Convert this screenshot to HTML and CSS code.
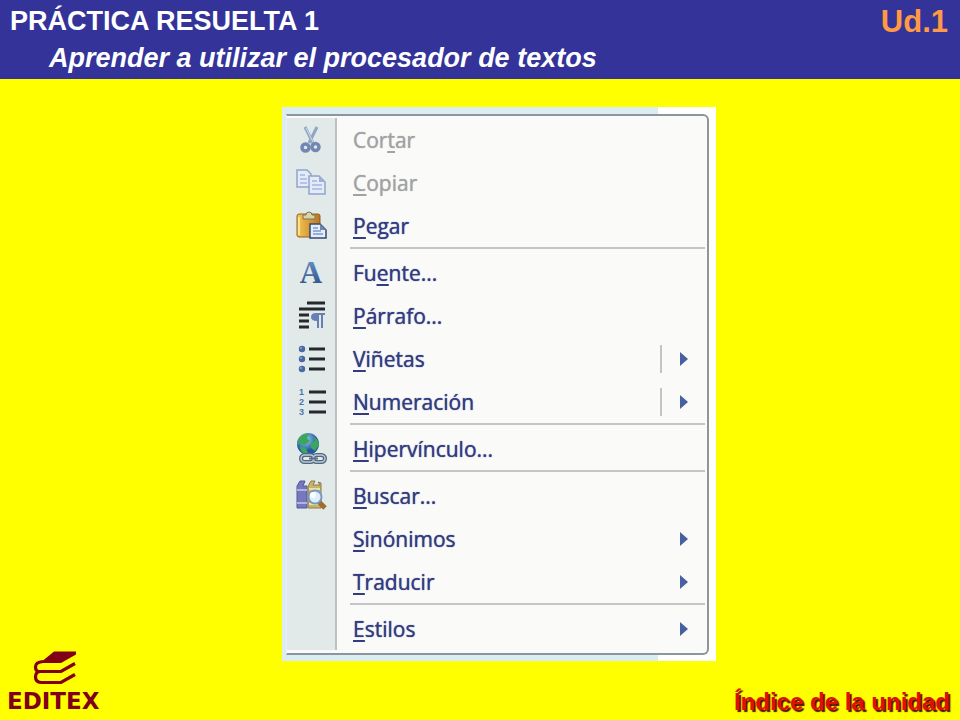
FILE: index.html
```html
<!DOCTYPE html>
<html lang="es">
<head>
<meta charset="utf-8">
<title>Práctica resuelta 1</title>
<link rel="stylesheet" href="styles.css">
</head>
<body>
<header class="header">
  <div>
    <h1 class="title">PRÁCTICA RESUELTA 1</h1>
    <p class="subtitle">Aprender a utilizar el procesador de textos</p>
  </div>
  <p class="unit">Ud.1</p>
</header>
<main class="stage">
  <div class="brand">
    <svg class="brand-mark" width="44" height="36" viewBox="0 0 44 36" aria-hidden="true">
      <path d="M21 1.500H43V4.500L28 13H7Z" fill="#800018"/>
      <path d="M10 11.500Q2.500 12 2.500 17T7 21.500H28L42 13.500M7 21.500Q2.500 22 2.500 27T8 32.500H28L42 24.500" fill="none" stroke="#800018" stroke-width="3.200"/>
    </svg>
    <span class="brand-name">EDITEX</span>
  </div>
  <div class="picture">
    <div class="menu">
      <ul class="list">
        <li><button class="item" type="button" disabled>
          <svg class="icon" viewBox="0 0 32 32"><path d="M10 3L18 19M22 3L14 19" stroke="#8fa5c4" stroke-width="3"/><path d="M11 4L18 18" stroke="#d3deeb"/><circle cx="10.500" cy="23.500" r="3.500" fill="none" stroke="#7288b2" stroke-width="3.500"/><circle cx="20.500" cy="23" r="3.500" fill="none" stroke="#7288b2" stroke-width="3.500"/></svg>
          <span class="label">Cor<u>t</u>ar</span></button></li>
        <li><button class="item" type="button" disabled>
          <svg class="icon" viewBox="0 0 32 32"><g fill="#e3ebf8" stroke="#91a4cb" stroke-width="1.500"><path d="M2 3H12L16 7V20H2Z"/><path d="M14 9H24L30 15V27H14Z"/></g><path d="M5 8H10M5 12H12M5 16H12M17 14H22M17 18H27M17 22H27" stroke="#a6b7da" stroke-width="1.500"/><path d="M24 9V15H30Z" fill="#9bb0d7"/></svg>
          <span class="label"><u>C</u>opiar</span></button></li>
        <li><button class="item" type="button">
          <svg class="icon" viewBox="0 0 32 32"><defs><linearGradient id="board"><stop stop-color="#f8c653"/><stop offset="1" stop-color="#b8761f"/></linearGradient></defs><rect x="2" y="4" width="23" height="23" rx="2" fill="url(#board)" stroke="#8f6127"/><path d="M8 9V5H11Q11 2 14 2T17 5H20V9Z" fill="#d8d4aa" stroke="#7b7450"/><path d="M4 25V7" stroke="#ffe38c" stroke-width="2"/><path d="M15 14H25L31 20V28H15Z" fill="#e3edfb" stroke="#364a70" stroke-width="1.500"/><path d="M25 14V20H31Z" fill="#6f87ac"/><path d="M18 18H23M18 21H26M18 24H28" stroke="#7d99c7" stroke-width="1.500"/></svg>
          <span class="label"><u>P</u>egar</span></button></li>
        <li class="divider" role="separator"></li>
        <li><button class="item" type="button">
          <svg class="icon" viewBox="0 0 32 32"><defs><linearGradient id="letter" x2="0" y2="1"><stop stop-color="#6f9bd1"/><stop offset="1" stop-color="#244a7e"/></linearGradient></defs><text class="letter-a" x="16" y="26" text-anchor="middle" fill="url(#letter)">A</text></svg>
          <span class="label">Fu<u>e</u>nte...</span></button></li>
        <li><button class="item" type="button">
          <svg class="icon" viewBox="0 0 32 32"><path d="M12 3H30M4 9H30M4 15H14M4 21H14M4 27H14" stroke="#25292d" stroke-width="3"/><path d="M21 13H30V15H28V28H26V15H24V28H22V21Q16 21 16 17T21 13Z" fill="#6680b5"/></svg>
          <span class="label"><u>P</u>árrafo...</span></button></li>
        <li><button class="item split" type="button">
          <svg class="icon" viewBox="0 0 32 32"><path d="M14 6H30M14 16H30M14 26H30" stroke="#25292d" stroke-width="3"/><g fill="#49699f"><circle cx="7" cy="6" r="3.200"/><circle cx="7" cy="16" r="3.200"/><circle cx="7" cy="26" r="3.200"/></g><g fill="#91acd5"><circle cx="6" cy="5" r="1"/><circle cx="6" cy="15" r="1"/><circle cx="6" cy="25" r="1"/></g></svg>
          <span class="label"><u>V</u>iñetas</span><span class="arrow"></span></button></li>
        <li><button class="item split" type="button">
          <svg class="icon" viewBox="0 0 32 32"><path d="M14 6H31M14 16H31M14 26H31" stroke="#25292d" stroke-width="3"/><g class="digits" fill="#4c74ae"><text x="4" y="9">1</text><text x="4" y="19">2</text><text x="4" y="29">3</text></g></svg>
          <span class="label"><u>N</u>umeración</span><span class="arrow"></span></button></li>
        <li class="divider" role="separator"></li>
        <li><button class="item" type="button">
          <svg class="icon" viewBox="0 0 32 32"><defs><radialGradient id="globe" cx=".4" cy=".3"><stop stop-color="#9ed5f1"/><stop offset="1" stop-color="#2458a8"/></radialGradient></defs><circle cx="13" cy="11" r="11" fill="url(#globe)"/><path d="M4 5Q9 0 14 1L12 5L15 8L10 12L5 10L2 12Q2 8 4 5ZM18 3Q24 7 24 12L20 18L16 15V10L20 8ZM5 13L11 15L13 20L10 21Q5 19 5 13Z" fill="#3ca65a"/><g fill="none" stroke="#53677e" stroke-width="4"><rect x="6" y="22" width="13" height="7" rx="3.500"/><rect x="18" y="22" width="12" height="7" rx="3.500"/></g><g fill="none" stroke="#b8cad8" stroke-width="1.500"><rect x="6" y="22" width="13" height="7" rx="3.500"/><rect x="18" y="22" width="12" height="7" rx="3.500"/></g><path d="M14 25.500H23" stroke="#5b7087" stroke-width="2"/></svg>
          <span class="label"><u>H</u>ipervínculo...</span></button></li>
        <li class="divider" role="separator"></li>
        <li><button class="item" type="button">
          <svg class="icon" viewBox="0 0 32 32"><path d="M2 6L5 1H10L8 6H12V28H2Z" fill="#7678bd" stroke="#54579a"/><path d="M2 10H12M2 23H12" stroke="#b0b2e3" stroke-width="2"/><path d="M13 6L16 1H20L18 5H25L23 2L26 3V28H13Z" fill="#c8b36c" stroke="#8c7c48"/><path d="M14 9H25M14 24H25" stroke="#eee0a2" stroke-width="2"/><path d="M24 22L30 28" stroke="#a06e2b" stroke-width="5"/><circle cx="20" cy="17" r="6.500" fill="#dceeff" stroke="#7898c4" stroke-width="2"/><circle cx="18" cy="15" r="3" fill="#fff"/></svg>
          <span class="label"><u>B</u>uscar...</span></button></li>
        <li><button class="item" type="button"><span class="icon"></span><span class="label"><u>S</u>inónimos</span><span class="arrow"></span></button></li>
        <li><button class="item" type="button"><span class="icon"></span><span class="label"><u>T</u>raducir</span><span class="arrow"></span></button></li>
        <li class="divider" role="separator"></li>
        <li><button class="item" type="button"><span class="icon"></span><span class="label"><u>E</u>stilos</span><span class="arrow"></span></button></li>
      </ul>
    </div>
  </div>
  <a class="index-link" href="#">Índice de la unidad</a>
</main>
</body>
</html>
```
FILE: styles.css
```css
* { box-sizing: border-box; }
body {
  margin: 0;
  min-height: 100vh;
  display: flex;
  flex-direction: column;
  background: #ffff00;
  font-family: "Liberation Sans", Arial, sans-serif;
}
.header {
  display: flex;
  justify-content: space-between;
  padding: 3px 12px 2px 10px;
  background: #333399;
  color: #fff;
  font-weight: bold;
}
.title, .subtitle, .unit { margin: 0; line-height: 37px; }
.title { font-size: 27px; }
.subtitle { padding-left: 39px; font-size: 27px; font-style: italic; }
.unit { color: #ff9944; font-size: 31px; }

.stage {
  flex: 1;
  display: grid;
  grid-template-columns: 282fr 434px 244fr;
  padding-top: 28px;
}
.brand {
  align-self: end;
  justify-self: start;
  display: flex;
  flex-direction: column;
  padding: 0 0 4px 7px;
  color: #800018;
}
.brand-mark { margin-left: 26px; }
.brand-name {
  font: bold 23px/30px "DejaVu Sans", sans-serif;
}
.index-link {
  align-self: end;
  justify-self: end;
  padding: 0 10px 4px 0;
  color: #e01000;
  font-size: 24px;
  line-height: 28px;
  font-weight: bold;
  text-decoration: none;
  text-shadow: 2px 2px 1px #501000;
}

.picture {
  align-self: start;
  padding: 7px 7px 6px 4px;
  background: linear-gradient(to right, #dbecf2 calc(100% - 58px), #fff calc(100% - 58px));
}
.menu {
  padding: 2px 2px 3px 0;
  border: 2px solid #8d959d;
  border-left: 1px solid #e8f0f2;
  border-radius: 0 6px 6px 0;
  background: #fafaf9;
}
.list {
  margin: 0;
  padding: 0;
  list-style: none;
  background: linear-gradient(to right, #e1e9e9 48px, #bcc2c4 48px, #bcc2c4 50px, transparent 50px);
}
.item {
  display: flex;
  align-items: center;
  width: 100%;
  height: 43px;
  padding: 0 17px 0 8px;
  border: 0;
  background: none;
  color: #343c80;
  font: 500 21px/28px "Open Sans", "Noto Sans", sans-serif;
  text-align: left;
  text-shadow: 0 0 1px currentColor;
}
.item:disabled { color: #a2a2a4; }
.icon { flex: none; width: 32px; height: 32px; overflow: visible; text-shadow: none; }
.label { flex: 1; padding-left: 26px; }
.label u { text-decoration-thickness: 2px; text-underline-offset: 3px; text-decoration-skip-ink: none; }
.arrow {
  border: 7px solid transparent;
  border-left: 8px solid #4660a0;
  border-right: 0;
}
.split .arrow { position: relative; }
.split .arrow::before {
  content: "";
  position: absolute;
  right: 26px;
  top: -14px;
  width: 2px;
  height: 28px;
  background: #c3c5c4;
}
.divider {
  height: 4px;
  margin-left: 63px;
  border-top: 2px solid #c3c5c8;
}
.letter-a { font: bold 31px "Liberation Serif", serif; }
.digits { font: bold 9px "Liberation Sans", sans-serif; }
```
